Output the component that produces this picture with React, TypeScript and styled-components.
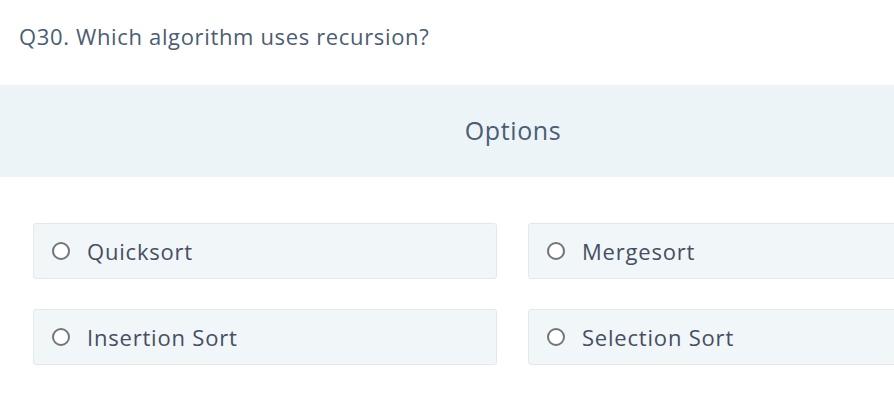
import React from "react";
import styled, { createGlobalStyle } from "styled-components";

const Global = createGlobalStyle`
  html, body { margin: 0; padding: 0; background: #ffffff; overflow: hidden; }
  body { font-family: "Open Sans", "Lato", sans-serif; }
`;

const Page = styled.div`
  width: 1026px;
  display: flex;
  flex-direction: column;
`;

const Question = styled.h2`
  margin: 0;
  padding: 21px 19px 0;
  height: 61px;
  box-sizing: border-box;
  font-size: 22px;
  letter-spacing: 0.65px;
  font-weight: 400;
  color: #4a5d74;
  line-height: 30px;
`;

const Band = styled.div`
  margin-top: 24px;
  height: 92px;
  background: #ecf4f7;
  display: flex;
  align-items: center;
  justify-content: center;
`;

const BandTitle = styled.span`
  font-size: 25px;
  letter-spacing: 0.6px;
  color: #4a5d74;
  padding-bottom: 2px;
`;

const Grid = styled.div`
  display: grid;
  grid-template-columns: 464px 464px;
  column-gap: 31px;
  row-gap: 30px;
  padding: 46px 33px 0;
`;

const Card = styled.label`
  height: 56px;
  box-sizing: border-box;
  background: #f1f6f8;
  border: 1px solid #e2e9ec;
  border-radius: 3px;
  display: flex;
  align-items: center;
  padding-left: 18px;
  gap: 17px;
  cursor: pointer;
`;

const Radio = styled.span`
  display: block;
  width: 18px;
  height: 18px;
  box-sizing: border-box;
  border: 2px solid #72767b;
  border-radius: 50%;
  background: #ffffff;
  flex: none;
`;

const Label = styled.span`
  font-size: 22px;
  letter-spacing: 0.8px;
  color: #464e63;
`;

const options = ["Quicksort", "Mergesort", "Insertion Sort", "Selection Sort"];

export default function App() {
  return (
    <>
      <Global />
      <Page>
        <Question>Q30. Which algorithm uses recursion?</Question>
        <Band>
          <BandTitle>Options</BandTitle>
        </Band>
        <Grid>
          {options.map((o) => (
            <Card key={o}>
              <Radio />
              <Label>{o}</Label>
            </Card>
          ))}
        </Grid>
      </Page>
    </>
  );
}
